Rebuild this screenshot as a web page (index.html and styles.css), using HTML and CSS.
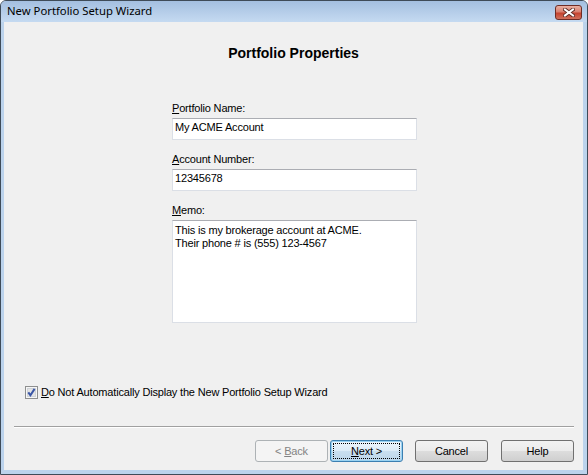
FILE: index.html
```html
<!DOCTYPE html>
<html>
<head>
<meta charset="utf-8">
<title>New Portfolio Setup Wizard</title>
<link rel="stylesheet" href="styles.css">
</head>
<body>
<div class="window">
  <div class="titlebar">
    <span class="title">New Portfolio Setup Wizard</span>
    <span class="close">
      <svg width="12" height="9" viewBox="0 0 12 9">
        <path d="M2 1.5 L10 7.5 M10 1.5 L2 7.5" stroke="#5c2b24" stroke-width="3.8" stroke-linecap="square" fill="none"/>
        <path d="M2 1.5 L10 7.5 M10 1.5 L2 7.5" stroke="#ffffff" stroke-width="2" stroke-linecap="square" fill="none"/>
      </svg>
    </span>
  </div>
  <div class="client">
    <h1 class="heading">Portfolio Properties</h1>
    <div class="form">
      <div class="lbl"><u>P</u>ortfolio Name:</div>
      <div class="field">My ACME Account</div>
      <div class="lbl"><u>A</u>ccount Number:</div>
      <div class="field">12345678</div>
      <div class="lbl"><u>M</u>emo:</div>
      <div class="field memo">This is my brokerage account at ACME.<br>Their phone # is (555) 123-4567</div>
    </div>
    <div class="check-row">
      <span class="checkbox">
        <svg width="13" height="13" viewBox="0 0 13 13">
          <rect x="0.5" y="0.5" width="12" height="12" fill="#f6f6f6" stroke="#8e8f8f"/>
          <rect x="2.5" y="2.5" width="8" height="8" fill="#e4e4e4" stroke="#cfd3d8"/>
          <path d="M3.3 6.4 L5.4 9.2 L9.6 2.9" stroke="#3a56a6" stroke-width="2" fill="none"/>
        </svg>
      </span>
      <span><u>D</u>o Not Automatically Display the New Portfolio Setup Wizard</span>
    </div>
    <div class="sep"></div>
    <div class="buttons">
      <div class="btn btn-back"><span>&lt; <u>B</u>ack</span></div>
      <div class="btn btn-next"><span class="focus"></span><span><u>N</u>ext &gt;</span></div>
      <div class="btn btn-cancel"><span>Cancel</span></div>
      <div class="btn btn-help"><span>Help</span></div>
    </div>
  </div>
</div>
</body>
</html>
```
FILE: styles.css
```css
html, body {
  margin: 0;
  padding: 0;
  background: #ffffff;
}
body {
  font-family: "Liberation Sans", Arial, sans-serif;
  font-size: 11px;
  letter-spacing: -0.18px;
  color: #000000;
}
u {
  text-underline-offset: 1px;
}
.window {
  width: 588px;
  height: 475px;
  box-sizing: border-box;
  border: 1px solid #3f4b58;
  border-radius: 6px 6px 0 0;
  background: #bcd3ec;
  display: flex;
  flex-direction: column;
  overflow: hidden;
}
.titlebar {
  height: 21px;
  flex: none;
  display: flex;
  justify-content: space-between;
  align-items: flex-start;
  background: linear-gradient(#a4bfe0, #c5daf1);
}
.title {
  font-family: "Noto Sans", sans-serif;
  font-size: 11.3px;
  letter-spacing: 0;
  line-height: 16px;
  padding: 2px 0 0 6px;
  color: #000;
}
.close {
  margin: 4px 5px 0 0;
  width: 27px;
  height: 15px;
  box-sizing: border-box;
  border: 1px solid #6e2c25;
  border-radius: 3px;
  background: linear-gradient(#eab0a2 0%, #d88070 45%, #c5432f 55%, #d0705c 100%);
  display: flex;
  align-items: center;
  justify-content: center;
}
.close svg {
  display: block;
}
.client {
  flex: 1;
  margin: 0 4px 4px 3px;
  background: #f0f0f0;
  display: flex;
  flex-direction: column;
}
.heading {
  margin: 23px 0 0;
  font-size: 14px;
  font-weight: bold;
  letter-spacing: 0;
  line-height: 16px;
  text-align: center;
}
.form {
  margin: 41px 0 0 168px;
  width: 245px;
  display: flex;
  flex-direction: column;
}
.lbl {
  height: 13px;
  line-height: 13px;
}
.field {
  margin-top: 3px;
  height: 22px;
  box-sizing: border-box;
  border: 1px solid #dbdfe6;
  border-top-color: #abadb3;
  background: #ffffff;
  padding: 2px 2px 0;
  line-height: 13px;
}
.field + .lbl {
  margin-top: 13px;
}
.memo {
  height: 103px;
  padding-top: 3px;
}
.check-row {
  margin-top: 63px;
  padding-left: 21px;
  height: 13px;
  line-height: 13px;
  display: flex;
  align-items: center;
  gap: 3px;
}
.checkbox, .checkbox svg {
  display: block;
  width: 13px;
  height: 13px;
}
.sep {
  margin: 27px 9px 0 10px;
  height: 1px;
  background: #a0a0a0;
  border-bottom: 1px solid #ffffff;
}
.buttons {
  margin-top: 12px;
  padding-right: 9px;
  display: flex;
  justify-content: flex-end;
}
.btn {
  width: 73px;
  height: 22px;
  box-sizing: border-box;
  border: 1px solid #707070;
  border-radius: 3px;
  background: linear-gradient(#f2f2f2 0%, #ebebeb 50%, #dddddd 50%, #cfcfcf 100%);
  display: flex;
  align-items: center;
  justify-content: center;
  line-height: 13px;
}
.btn-back {
  border-color: #adb2b5;
  background: #f4f4f4;
  color: #838383;
}
.btn-next {
  position: relative;
  margin-left: 2px;
  border-color: #3c7fb1;
  background: linear-gradient(#eef6fd 0%, #dcebf7 50%, #cadff0 50%, #bcd5ea 100%);
  box-shadow: inset 0 0 0 1px #9ad3f2;
}
.focus {
  position: absolute;
  inset: 2px;
  border: 1px dotted #000000;
}
.btn-cancel {
  margin-left: 12px;
}
.btn-help {
  margin-left: 13px;
}
```
